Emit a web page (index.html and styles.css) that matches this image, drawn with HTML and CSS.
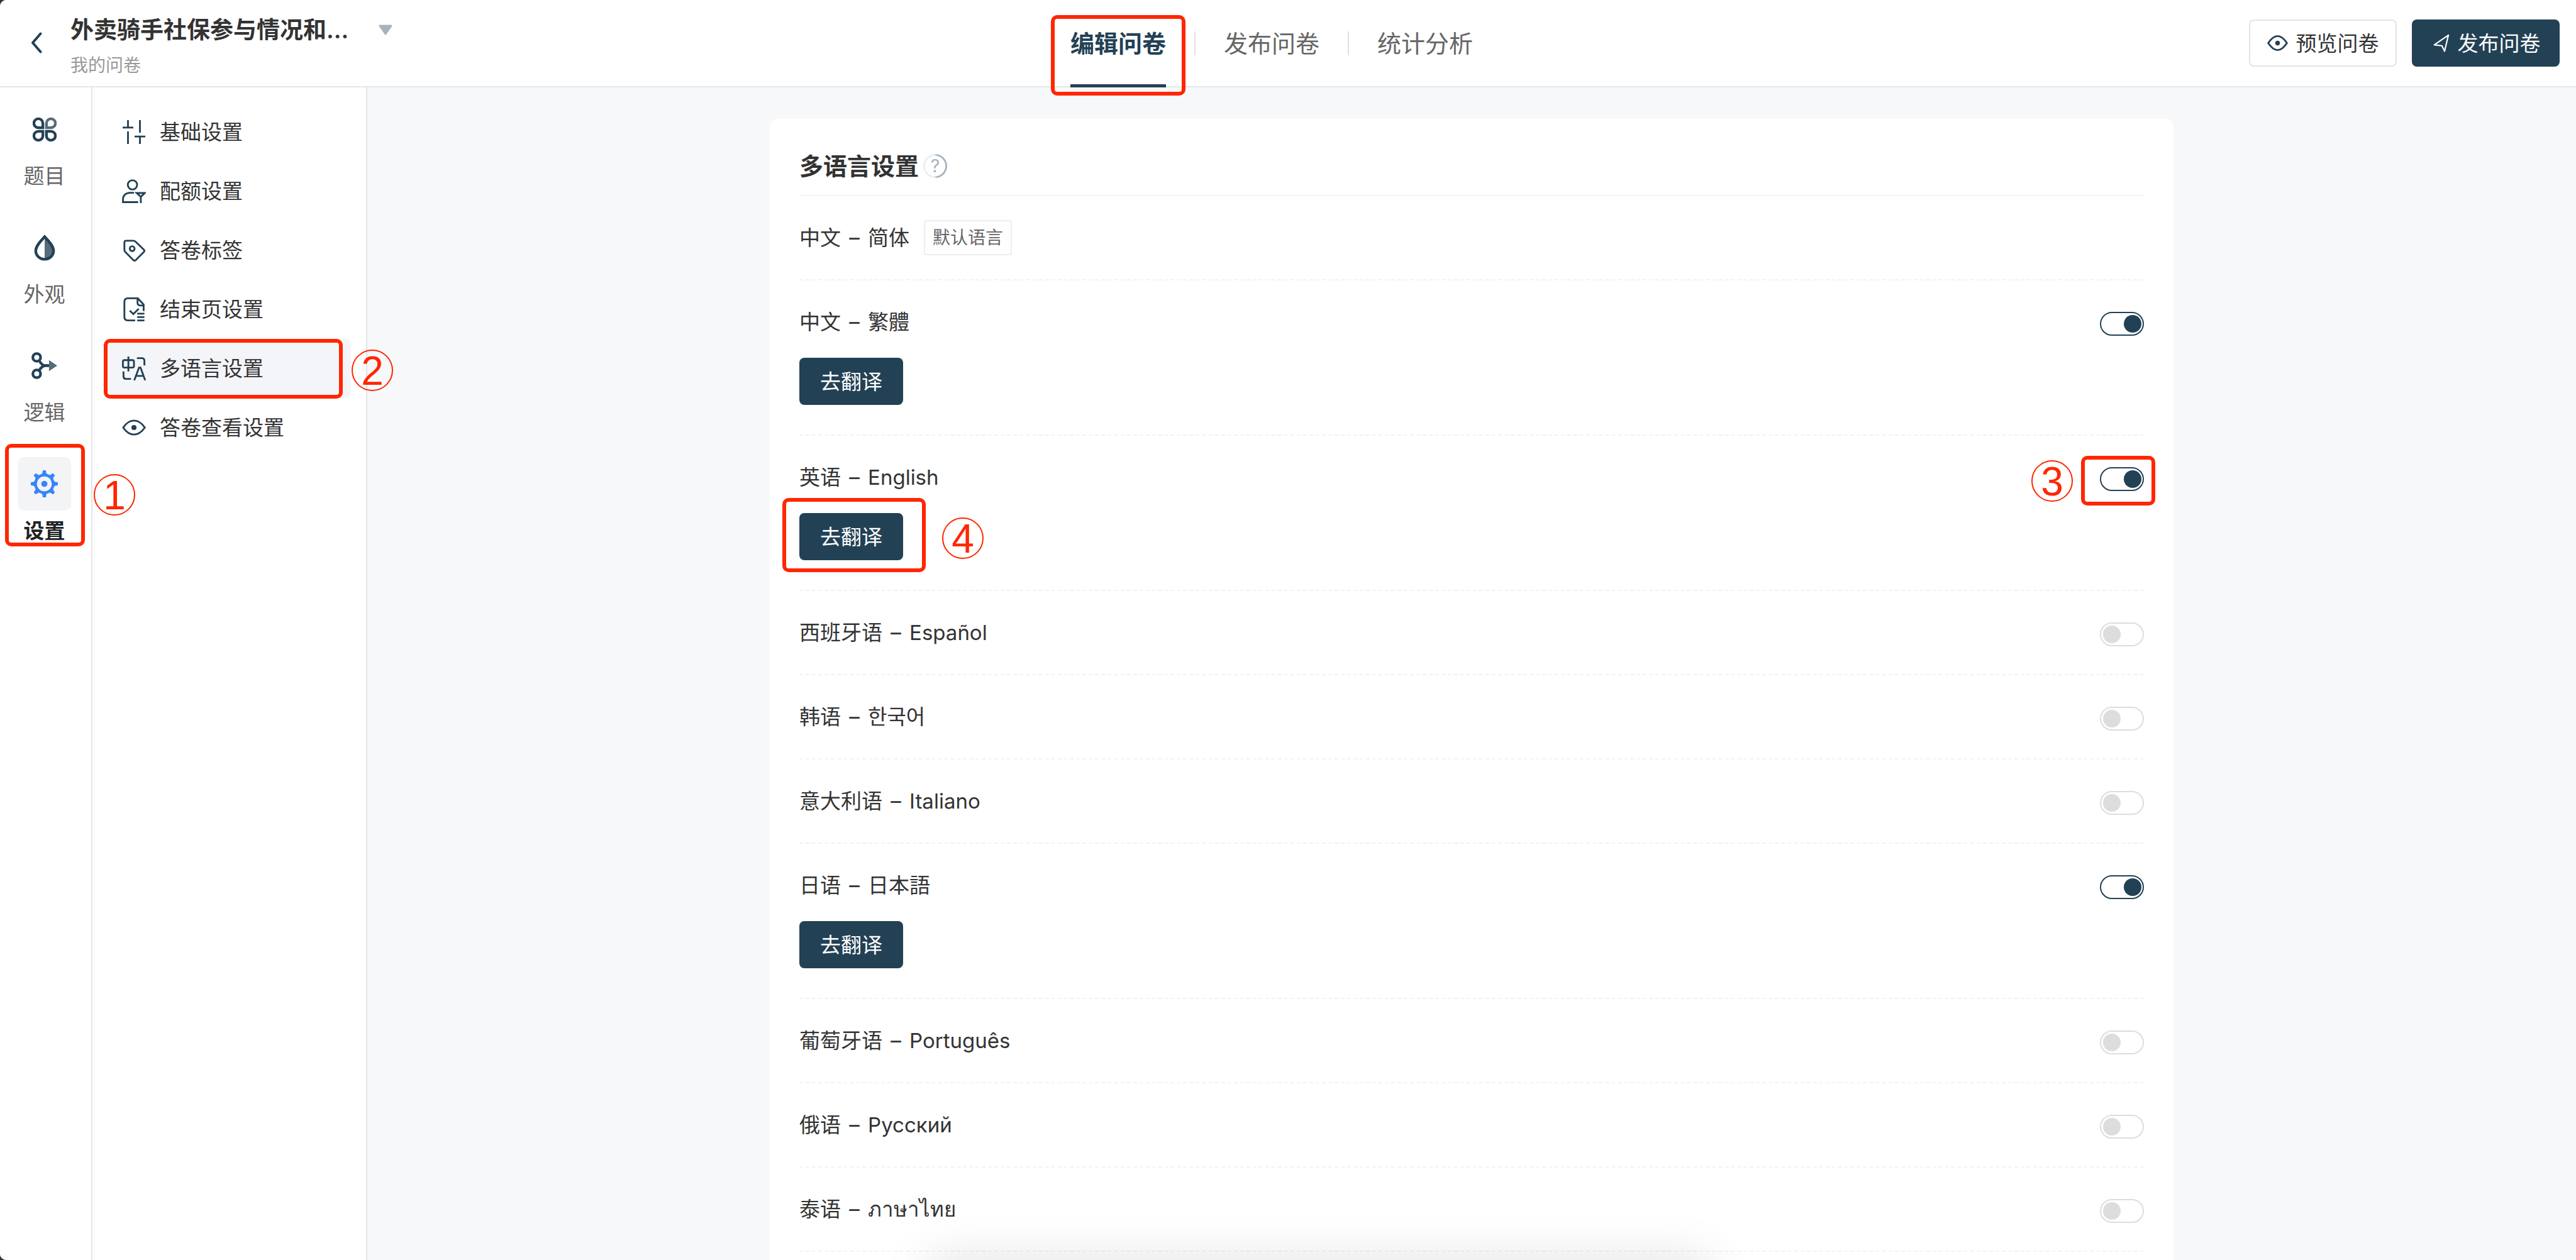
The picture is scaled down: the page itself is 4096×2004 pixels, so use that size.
FILE: index.html
```html
<!DOCTYPE html>
<html lang="zh-CN">
  <head>
    <meta charset="utf-8">
    <title>多语言设置</title>
    <link rel="stylesheet" href="styles.css">
  </head>

  <body>
    <div class="app">
      <header class="header">
        <div class="header-left">
          <button type="button" class="back" aria-label="返回">
            <svg width="20" height="34" viewBox="0 0 20 34"><path d="M16.500 2.500L4 17l12.500 14.500" fill="none" stroke="#234155" stroke-width="4" stroke-linecap="round" stroke-linejoin="round"/></svg>
          </button>
          <div class="survey">
            <h1>外卖骑手社保参与情况和...</h1>
            <p>我的问卷</p>
          </div>
          <button type="button" class="caret" aria-label="切换问卷">
            <svg width="22" height="17" viewBox="0 0 22 17"><path d="M2 2h18l-9 13z" fill="#a9b3bb" stroke="#a9b3bb" stroke-width="3" stroke-linejoin="round"/></svg>
          </button>
        </div>

        <nav class="tabs">
          <a href="#edit" class="tab active">编辑问卷<span class="mark mark-tab"></span></a>
          <span class="tab-line"></span>
          <a href="#publish" class="tab">发布问卷</a>
          <span class="tab-line"></span>
          <a href="#stats" class="tab">统计分析</a>
        </nav>

        <div class="header-right">
          <button type="button" class="button button-light">
            <svg width="33" height="33" viewBox="0 0 40 40"><path d="M2 20C8 11 14 6.500 20 6.500S32 11 38 20C32 29 26 33.500 20 33.500S8 29 2 20Z" fill="none" stroke="#234155" stroke-width="3.500" stroke-linejoin="round"/><circle cx="20" cy="20" r="4.500" fill="#234155"/></svg>
            预览问卷
          </button>
          <button type="button" class="button">
            <svg width="29" height="29" viewBox="0 0 31 31"><path d="M29 2L5 18.500 18 20l4.500 9.500z" fill="none" stroke="#fff" stroke-width="2.300" stroke-linejoin="round"/></svg>
            发布问卷
          </button>
        </div>
      </header>

      <div class="body">
        <nav class="rail">
          <a href="#questions" class="rail-item">
            <span class="rail-icon">
              <svg width="38" height="38" viewBox="0 0 40 40" fill="none" stroke="#234155" stroke-width="4.500">
                <path d="M17 17H9.500A7.500 7.500 0 1 1 17 9.500Z"/>
                <path d="M23 17H30.500A7.500 7.500 0 1 0 23 9.500Z" stroke="#566c7a"/>
                <path d="M17 23H9.500A7.500 7.500 0 1 0 17 30.500Z"/>
                <path d="M23 23H30.500A7.500 7.500 0 1 1 23 30.500Z"/>
              </svg>
            </span>
            题目
          </a>
          <a href="#theme" class="rail-item">
            <span class="rail-icon">
              <svg width="34" height="42" viewBox="0 0 36 44">
                <path d="M18 4C24 11 33 20 33 28A15 13.500 0 0 1 18 41Z" fill="#566c7a"/>
                <path d="M18 3.500C12 10 3 19 3 27A15 14.500 0 0 0 33 27C33 19 24 10 18 3.500Z" fill="none" stroke="#234155" stroke-width="4.600"/>
              </svg>
            </span>
            外观
          </a>
          <a href="#logic" class="rail-item">
            <span class="rail-icon">
              <svg width="41" height="43" viewBox="0 0 44 46" fill="none" stroke="#234155" stroke-width="4.600">
                <circle cx="9" cy="9" r="6.600"/>
                <circle cx="9" cy="37" r="6.600"/>
                <path d="M13 14C16 20 19 23 24 23H31M13 32C16 26 19 23 24 23"/>
                <path d="M30 13.500L44 23 30 32.500Z" fill="#566c7a" stroke="none"/>
              </svg>
            </span>
            逻辑
          </a>
          <a href="#settings" class="rail-item active">
            <span class="rail-icon">
              <svg width="43" height="43" viewBox="-23 -23 46 46" fill="#3685f9">
                <defs>
                  <path id="tooth" d="M-8 -14C-4 -16.500 -3 -18 -3 -21Q-3 -23 -1.500 -23H1.500Q3 -23 3 -21C3 -18 4 -16.500 8 -14Z"/>
                </defs>
                <circle r="15" fill="none" stroke="#3685f9" stroke-width="4.600"/>
                <circle r="5.200"/>
                <use href="#tooth"/>
                <use href="#tooth" transform="rotate(45)"/>
                <use href="#tooth" transform="rotate(90)"/>
                <use href="#tooth" transform="rotate(135)"/>
                <use href="#tooth" transform="rotate(180)"/>
                <use href="#tooth" transform="rotate(225)"/>
                <use href="#tooth" transform="rotate(270)"/>
                <use href="#tooth" transform="rotate(315)"/>
              </svg>
            </span>
            设置
            <span class="mark mark-rail"></span>
            <span class="step step-rail">1</span>
          </a>
        </nav>

        <nav class="menu">
          <a href="#basic" class="menu-item">
            <svg class="icon" viewBox="0 0 40 40"><path d="M10 0V12.500M1 12.500H19M10 19V40M30 0V21M21 27.500H39M30 27.500V40"/></svg>
            基础设置
          </a>
          <a href="#quota" class="menu-item">
            <svg class="icon" viewBox="0 0 40 40"><circle cx="17.500" cy="9.500" r="7.800"/><path d="M20 22.800H13C6 22.800 1.600 28 1.600 34V38.400H27M24.500 23.200H38L31.500 29.500ZM31.500 29V40"/></svg>
            配额设置
          </a>
          <a href="#tags" class="menu-item">
            <svg class="icon" viewBox="0 0 40 40"><path d="M4 7Q4 4 7 4H19Q21 4 22.500 5.500L36.500 19Q38.500 21 36.500 23L23 36.500Q21 38.500 19 36.500L5.500 23Q4 21.500 4 19Z"/><circle cx="17" cy="17.300" r="4"/></svg>
            答卷标签
          </a>
          <a href="#ending" class="menu-item">
            <svg class="icon" viewBox="0 0 40 40"><path d="M22 38.500H10Q4 38.500 4 32.500V7.500Q4 1.500 10 1.500H26.500L36.200 12V23M26 2V9Q26 13.500 30.500 13.500H36M13 22L19 28L28 19M25.500 27.300H37.500M25.500 33H37.500M25.500 38.500H37.500"/></svg>
            结束页设置
          </a>
          <a href="#languages" class="menu-item active">
            <svg class="icon" viewBox="0 0 40 40"><rect x="1.500" y="6" width="18.500" height="12.500" rx="2.500"/><path d="M10.700 0V25M25 2.700H33Q37.500 2.700 37.500 7.200V15M2.500 25V33.500Q2.500 37.500 6.500 37.500H15M20.500 40L28.500 18.500H31L38.800 40M23.500 32.500H36"/></svg>
            多语言设置
            <span class="mark mark-menu"></span>
            <span class="step step-menu">2</span>
          </a>
          <a href="#viewing" class="menu-item">
            <svg class="icon" viewBox="0 0 40 40"><path d="M2 20C8 11 14 8.300 20 8.300S32 11 38.200 20C32 29 26 31.700 20 31.700S8 29 2 20Z"/><circle cx="20" cy="20" r="4.300" fill="#234155" stroke="none"/></svg>
            答卷查看设置
          </a>
        </nav>

        <main class="content">
          <section class="card">
            <div class="card-head">
              <h2>多语言设置</h2>
              <svg width="38" height="38" viewBox="0 0 40 40">
                <defs>
                  <linearGradient id="ring" x1="0" y1="0" x2="1" y2="0">
                    <stop offset="0.450" stop-color="#e9eff3"/>
                    <stop offset="0.600" stop-color="#a9b3bc"/>
                  </linearGradient>
                </defs>
                <circle cx="20" cy="20" r="18.500" fill="none" stroke="url(#ring)" stroke-width="3"/>
                <text x="20" y="31" class="help">?</text>
              </svg>
            </div>

            <div class="row">
              <div class="row-line">
                <span>中文<span class="dash"> – </span>简体</span>
                <span class="badge">默认语言</span>
              </div>
            </div>

            <div class="row">
              <div class="row-line">
                <label for="zh-hant">中文<span class="dash"> – </span><span lang="zh-TW">繁體</span></label>
                <span class="switch"><input type="checkbox" id="zh-hant" checked></span>
              </div>
              <div class="row-action">
                <button type="button" class="button button-small">去翻译</button>
              </div>
            </div>

            <div class="row">
              <div class="row-line">
                <label for="en">英语<span class="dash"> – </span>English</label>
                <span class="switch">
                  <input type="checkbox" id="en" checked>
                  <span class="mark mark-switch"></span>
                  <span class="step step-switch">3</span>
                </span>
              </div>
              <div class="row-action">
                <button type="button" class="button button-small">去翻译</button>
                <span class="mark mark-action"></span>
                <span class="step step-action">4</span>
              </div>
            </div>

            <div class="row">
              <div class="row-line">
                <label for="es">西班牙语<span class="dash"> – </span>Español</label>
                <span class="switch"><input type="checkbox" id="es"></span>
              </div>
            </div>

            <div class="row">
              <div class="row-line">
                <label for="ko">韩语<span class="dash"> – </span><span lang="ko">한국어</span></label>
                <span class="switch"><input type="checkbox" id="ko"></span>
              </div>
            </div>

            <div class="row">
              <div class="row-line">
                <label for="it">意大利语<span class="dash"> – </span>Italiano</label>
                <span class="switch"><input type="checkbox" id="it"></span>
              </div>
            </div>

            <div class="row">
              <div class="row-line">
                <label for="ja">日语<span class="dash"> – </span><span lang="ja">日本語</span></label>
                <span class="switch"><input type="checkbox" id="ja" checked></span>
              </div>
              <div class="row-action">
                <button type="button" class="button button-small">去翻译</button>
              </div>
            </div>

            <div class="row">
              <div class="row-line">
                <label for="pt">葡萄牙语<span class="dash"> – </span>Português</label>
                <span class="switch"><input type="checkbox" id="pt"></span>
              </div>
            </div>

            <div class="row">
              <div class="row-line">
                <label for="ru">俄语<span class="dash"> – </span>Русский</label>
                <span class="switch"><input type="checkbox" id="ru"></span>
              </div>
            </div>

            <div class="row">
              <div class="row-line">
                <label for="th">泰语<span class="dash"> – </span><span lang="th">ภาษาไทย</span></label>
                <span class="switch"><input type="checkbox" id="th"></span>
              </div>
            </div>
          </section>
        </main>
      </div>

      <div class="drawer-shadow"></div>
    </div>
  </body>
</html>
```
FILE: styles.css
```css
* {
  box-sizing: border-box;
}

body {
  margin: 0;
  background: #333;
  color: #333;
  font-family: Inter, "Noto Sans CJK SC", sans-serif;
  font-size: 33px;
  line-height: 48px;
}

:lang(zh-TW) {
  font-family: Inter, "Noto Sans CJK TC", sans-serif;
}

:lang(ja) {
  font-family: Inter, "Noto Sans CJK JP", sans-serif;
}

:lang(ko) {
  font-family: Inter, "Noto Sans CJK KR", sans-serif;
}

h1,
h2,
p {
  margin: 0;
}

a {
  color: inherit;
  text-decoration: none;
}

button {
  padding: 0;
  border: none;
  background: none;
  font: inherit;
  cursor: pointer;
}

svg {
  display: block;
  flex: none;
}

.app {
  position: relative;
  display: flex;
  flex-direction: column;
  height: 100vh;
  overflow: hidden;
  background: #f6f8fa;
  border-radius: 10px 0 0 10px;
}

/* header */
.header {
  display: grid;
  grid-template-columns: 1fr auto 1fr;
  flex: none;
  height: 139px;
  background: #fff;
  border-bottom: 2px solid #e5e8ea;
}

.header-left,
.header-right {
  display: flex;
}

.header-left {
  align-items: flex-start;
  padding: 20px 0 0 48px;
}

.back {
  margin-top: 31px;
}

.survey {
  margin: 0 48px 0 44px;
  line-height: 56px;
}

.survey h1 {
  font-size: 37px;
  font-weight: 600;
}

.survey p {
  color: #999;
  font-size: 28px;
}

.caret {
  margin-top: 19px;
}

.tabs {
  display: flex;
  align-items: center;
  gap: 45px;
  padding-right: 52px;
}

.tab {
  position: relative;
  display: flex;
  align-items: center;
  height: 100%;
  color: #666;
  font-size: 38px;
}

.tab.active {
  color: #234155;
  font-weight: 600;
}

.tab.active::after {
  content: "";
  position: absolute;
  right: 0;
  bottom: -2px;
  left: 0;
  height: 5px;
  background: #234155;
}

.tab-line {
  width: 2px;
  height: 38px;
  background: #e1e1e1;
}

.header-right {
  align-items: center;
  justify-content: flex-end;
  gap: 24px;
  padding-right: 26px;
}

.button {
  display: flex;
  align-items: center;
  justify-content: center;
  gap: 13px;
  width: 235px;
  height: 75px;
  border-radius: 8px;
  background: #234155;
  color: #fff;
}

.button-light {
  border: 2px solid #e2e3e4;
  background: #fff;
  color: #333;
}

.button-small {
  width: 165px;
}

/* side navigation */
.body {
  display: flex;
  flex: 1;
  min-height: 0;
}

.rail {
  position: relative;
  z-index: 2;
  display: flex;
  flex-direction: column;
  flex: none;
  gap: 51px;
  width: 147px;
  padding: 24px 32px 0 28px;
  border-right: 2px solid #e5e5e5;
  background: #fff;
}

.rail-item {
  position: relative;
  display: flex;
  flex-direction: column;
  align-items: center;
  gap: 12px;
  color: #666;
  line-height: 40px;
}

.rail-icon {
  display: flex;
  align-items: center;
  justify-content: center;
  width: 85px;
  height: 85px;
  border-radius: 10px;
}

.rail-item.active {
  color: #222;
  font-weight: 600;
}

.rail-item.active .rail-icon {
  background: #f2f4f6;
}

.menu {
  position: relative;
  z-index: 1;
  flex: none;
  width: 437px;
  padding: 24px;
  border-right: 2px solid #e5e5e5;
  background: #fff;
}

.menu-item {
  position: relative;
  display: flex;
  align-items: center;
  gap: 22px;
  height: 94px;
  padding-left: 23px;
  border-radius: 8px;
}

.menu-item.active {
  background: #f4f5f8;
}

.icon {
  width: 38px;
  height: 38px;
  fill: none;
  stroke: #234155;
  stroke-width: 3;
}

/* settings card */
.content {
  flex: 1;
  min-width: 0;
  padding: 50px 47px 0;
}

.card {
  max-width: 2232px;
  margin: 0 auto;
  padding: 51px 47px;
  border-radius: 12px;
  background: #fff;
}

.card-head {
  display: flex;
  align-items: center;
  gap: 7px;
  padding-bottom: 22px;
  border-bottom: 2px solid #f2f4f5;
}

.card-head h2 {
  font-size: 38px;
  font-weight: 600;
}

.help {
  fill: #a9b3bc;
  font-size: 30px;
  text-anchor: middle;
}

.row {
  padding: 42px 0;
  border-bottom: 2px dashed #f2f2f2;
}

.row-line {
  display: flex;
  align-items: center;
  height: 48px;
}

.dash {
  margin: 0 4px;
}

.badge {
  margin-left: 23px;
  padding: 2px 12px;
  border: 2px solid #eee;
  border-radius: 4px;
  color: #666;
  font-size: 28px;
}

.row-action {
  position: relative;
  width: 165px;
  padding: 33px 0 5px;
}

.switch {
  position: relative;
  display: flex;
  margin: 6px 0 0 auto;
}

.switch input {
  width: 70px;
  height: 38px;
  margin: 0;
  padding: 3px 2px 3px 3px;
  appearance: none;
  border: 2px solid #ddd;
  border-radius: 19px;
  background: #fff;
}

.switch input::before {
  content: "";
  display: block;
  width: 28px;
  height: 28px;
  border-radius: 50%;
  background: #ddd;
}

.switch input:checked {
  border-color: #234155;
}

.switch input:checked::before {
  margin-left: auto;
  background: #234155;
}

/* guide marks */
.mark {
  position: absolute;
  border: 6px solid #ff2600;
  border-radius: 10px;
}

.mark-tab {
  top: 24px;
  right: -31px;
  bottom: -15px;
  left: -31px;
}

.mark-rail {
  top: -21px;
  right: -22px;
  bottom: -5px;
  left: -20px;
}

.mark-menu {
  top: 0;
  right: 13px;
  bottom: -1px;
  left: -6px;
}

.mark-switch {
  top: -18px;
  right: -18px;
  bottom: -23px;
  left: -30px;
}

.mark-action {
  top: 9px;
  right: -36px;
  bottom: -14px;
  left: -27px;
}

.step {
  position: absolute;
  width: 66px;
  height: 66px;
  border: 2px solid #ff2600;
  border-radius: 50%;
  color: #ff2600;
  font-family: "Liberation Sans", sans-serif;
  font-size: 64px;
  font-weight: 400;
  line-height: 64px;
  text-align: center;
}

.step-rail {
  bottom: 44px;
  left: 121px;
}

.step-menu {
  top: 17px;
  right: -67px;
}

.step-switch {
  top: -11px;
  left: -109px;
}

.step-action {
  top: 40px;
  left: 227px;
}

.drawer-shadow {
  position: absolute;
  top: 100%;
  left: 50%;
  width: 1240px;
  height: 80px;
  margin-left: -570px;
  box-shadow: 0 0 80px rgba(0, 0, 0, 0.12);
}
```
